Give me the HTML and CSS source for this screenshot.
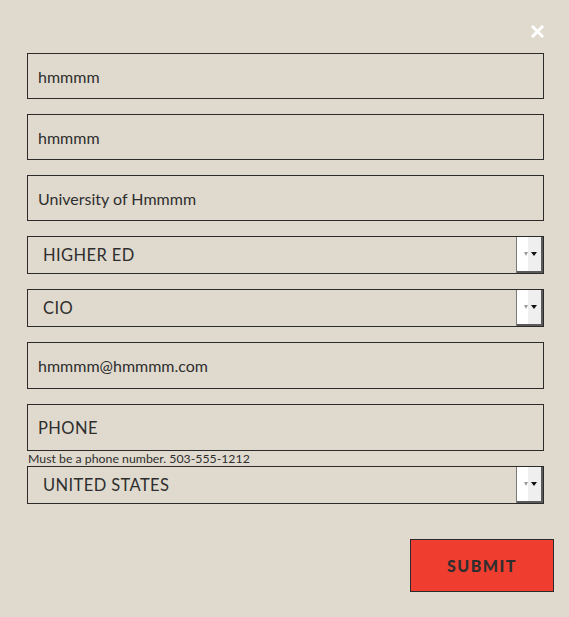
FILE: index.html
```html
<!DOCTYPE html>
<html>
<head>
<meta charset="utf-8">
<link rel="stylesheet" href="styles.css">
</head>
<body>
<div class="modal">
  <button class="close" aria-label="Close">
    <svg width="13" height="13" viewBox="0 0 13 13"><path d="M2 2 L11 11 M11 2 L2 11" stroke="#fff" stroke-width="3" stroke-linecap="square"/></svg>
  </button>
  <form class="form">
    <div class="field">hmmmm</div>
    <div class="field">hmmmm</div>
    <div class="field">University of Hmmmm</div>
    <div class="select"><span class="select-text">HIGHER ED</span><span class="arrow"><span class="a1"></span><span class="a2"></span></span></div>
    <div class="select"><span class="select-text">CIO</span><span class="arrow"><span class="a1"></span><span class="a2"></span></span></div>
    <div class="field field-email">hmmmm@hmmmm.com</div>
    <div class="field field-placeholder">PHONE</div>
    <div class="help">Must be a phone number. 503-555-1212</div>
    <div class="select select-last"><span class="select-text">UNITED STATES</span><span class="arrow"><span class="a1"></span><span class="a2"></span></span></div>
    <div class="actions"><button type="button" class="submit">SUBMIT</button></div>
  </form>
</div>
</body>
</html>
```

FILE: styles.css
```css
html, body {
  margin: 0;
  padding: 0;
  background: #e0dace;
}
body {
  font-family: "Lato", "Open Sans", sans-serif;
  color: #2e2e2e;
}
.modal {
  position: relative;
  width: 569px;
  height: 617px;
  box-sizing: border-box;
  padding: 53px 0 0 27px;
}
.close {
  position: absolute;
  top: 25px;
  right: 25px;
  width: 13px;
  height: 13px;
  padding: 0;
  border: 0;
  background: none;
  display: block;
}
.close svg { display: block; }
.form {
  display: flex;
  flex-direction: column;
  width: 517px;
}
.field {
  box-sizing: border-box;
  height: 46px;
  border: 1px solid #2b2b2b;
  padding: 0 10px;
  display: flex;
  align-items: center;
  font-size: 16px;
  margin-bottom: 15px;
}
.field-email {
  height: 47px;
}
.field-placeholder {
  font-size: 16.5px;
  letter-spacing: 0.4px;
  margin-bottom: 0;
  height: 47px;
}
.help {
  font-size: 12.3px;
  line-height: 15px;
  height: 15px;
  padding-left: 1px;
  color: #2e2e2e;
}
.select {
  box-sizing: border-box;
  height: 38px;
  border: 1px solid #2b2b2b;
  display: flex;
  align-items: stretch;
  margin-bottom: 15px;
}
.select-last { margin-bottom: 35px; }
.select-text {
  flex: 1;
  display: flex;
  align-items: center;
  padding-left: 15px;
  font-size: 16.5px;
  letter-spacing: 0.4px;
}
.arrow {
  position: relative;
  width: 26px;
  border-left: 1px solid #7a7a7a;
  background: linear-gradient(to right, #ffffff 0, #ffffff 11px, #efefef 11px);
  box-shadow: inset -2px -2px 0 #5a5a5a;
}
.a1 {
  position: absolute;
  left: 7px;
  top: 15px;
  width: 0;
  height: 0;
  border-left: 2px solid transparent;
  border-right: 2px solid transparent;
  border-top: 4px solid #9a9a9a;
}
.a2 {
  position: absolute;
  left: 14px;
  top: 15px;
  width: 0;
  height: 0;
  border-left: 3.5px solid transparent;
  border-right: 3.5px solid transparent;
  border-top: 4px solid #111;
}
.actions {
  display: flex;
  justify-content: flex-end;
  margin-right: -10px;
}
.submit {
  width: 144px;
  height: 53px;
  box-sizing: border-box;
  background: #ef3e2f;
  border: 1px solid #2b2b2b;
  font-family: "Lato", sans-serif;
  font-weight: 900;
  font-size: 16px;
  letter-spacing: 1.5px;
  color: #2e2e2e;
  padding: 0;
}
```
